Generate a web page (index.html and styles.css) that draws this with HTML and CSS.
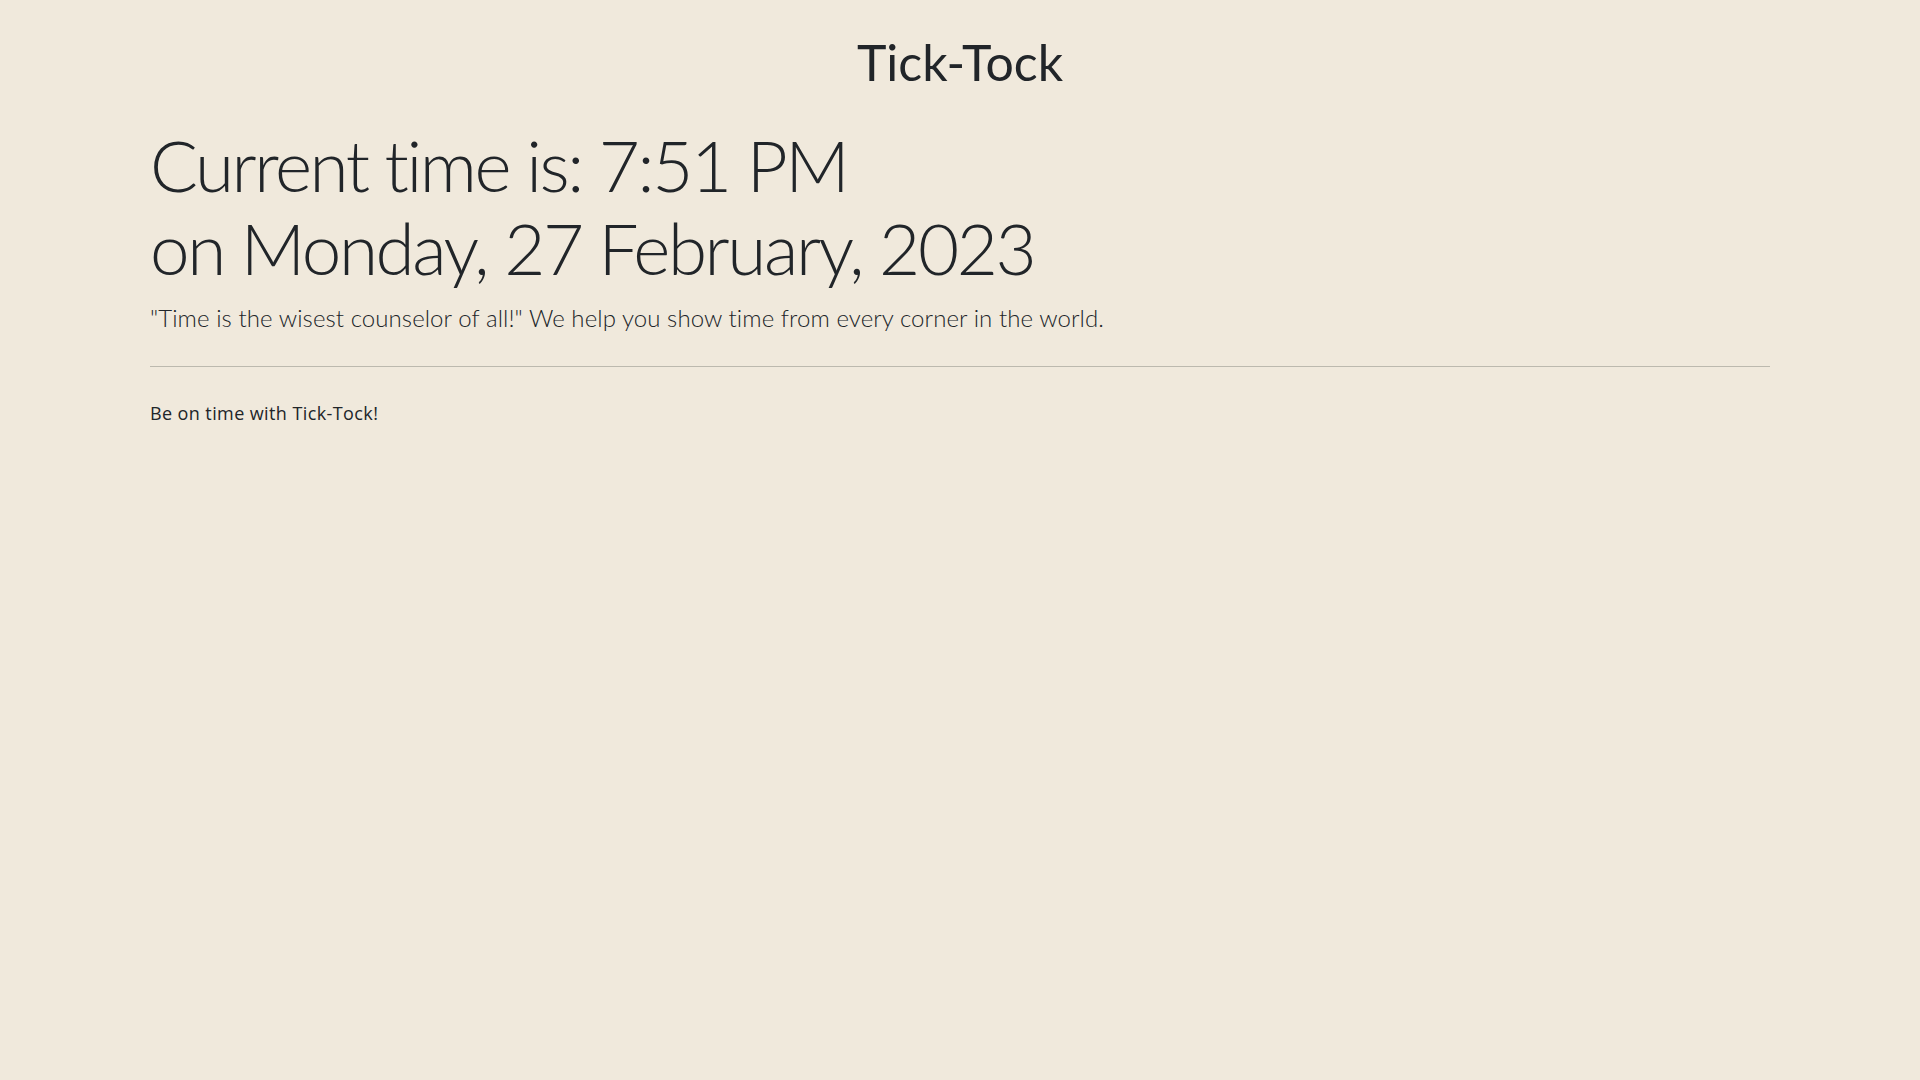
FILE: index.html
```html
<!DOCTYPE html>
<html lang="en">
<head>
<meta charset="utf-8">
<title>Tick-Tock</title>
<link rel="stylesheet" href="styles.css">
</head>
<body>
<header class="site-header">
  <h1 class="brand">Tick-Tock</h1>
</header>
<main class="container">
  <h2 class="display">Current time is: 7:51 PM<br>on Monday, 27 February, 2023</h2>
  <p class="lead">"Time is the wisest counselor of all!" We help you show time from every corner in the world.</p>
  <hr class="divider">
  <p class="footer-note">Be on time with Tick-Tock!</p>
</main>
</body>
</html>
```
FILE: styles.css
```css
html, body {
  margin: 0;
  padding: 0;
}
body {
  background: #f0e9dc;
  color: #212529;
  font-family: Lato, "Open Sans", sans-serif;
  font-variant-ligatures: none;
  min-height: 1080px;
}
.site-header {
  padding-top: 32px;
  text-align: center;
}
.brand {
  margin: 0;
  font-size: 50px;
  line-height: 60px;
  font-weight: 400;
}
.container {
  max-width: 1620px;
  margin: 0 auto;
  padding-top: 31px;
}
.display {
  margin: 0;
  font-size: 71px;
  line-height: 83px;
  font-weight: 300;
  letter-spacing: -2.4px;
}
.lead {
  margin: 14px 0 0;
  font-size: 24px;
  line-height: 30px;
  font-weight: 300;
  letter-spacing: 0.08px;
}
.divider {
  margin: 33px 0 0;
  border: 0;
  border-top: 1px solid #bcb9ae;
  height: 0;
}
.footer-note {
  margin: 35px 0 0;
  font-family: "Open Sans", Lato, sans-serif;
  font-size: 18px;
  line-height: 22px;
  letter-spacing: 0.4px;
}
```
